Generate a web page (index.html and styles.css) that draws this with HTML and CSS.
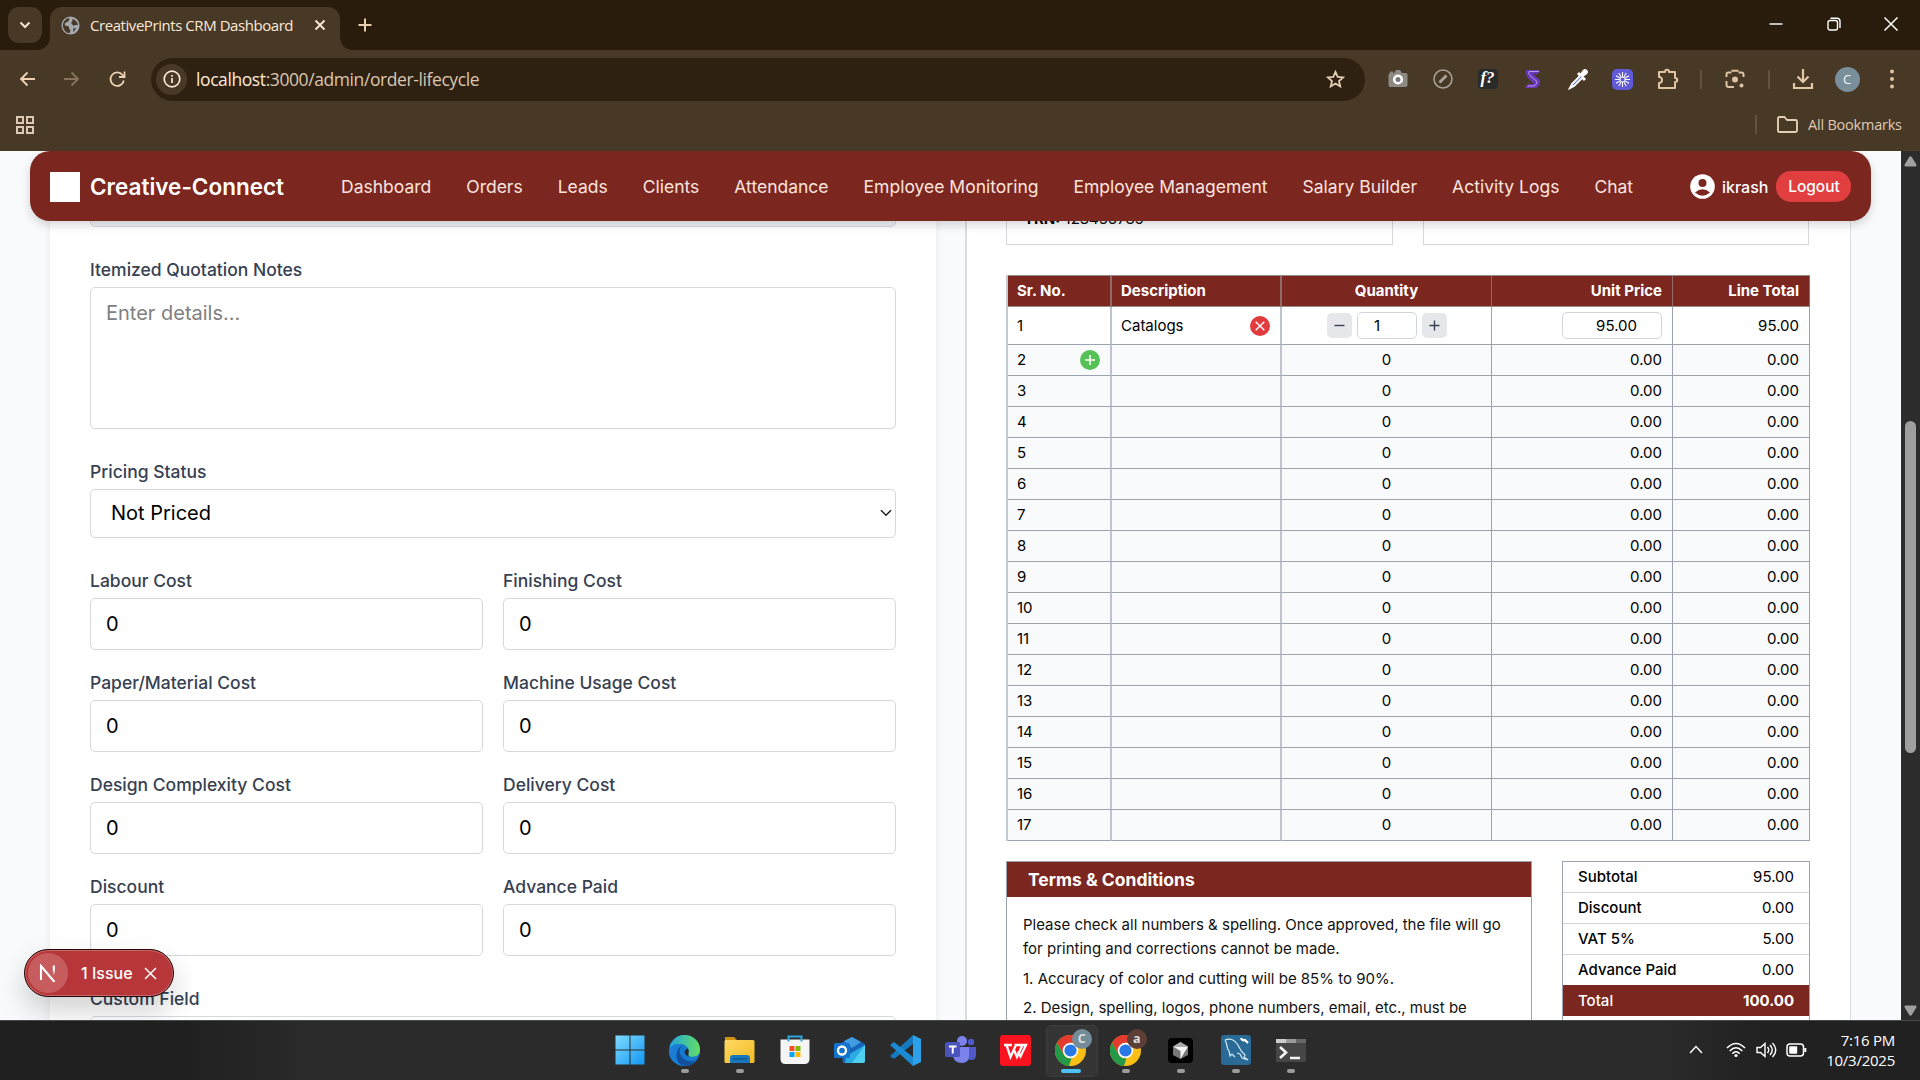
FILE: index.html
```html
<!DOCTYPE html>
<html lang="en">
<head>
<meta charset="utf-8">
<title>CreativePrints CRM Dashboard</title>
<link rel="stylesheet" href="styles.css">
</head>
<body>
<header class="tabstrip">
  <div class="tab-search"><svg width="12" height="8" viewBox="0 0 12 8" fill="none" stroke="#f5e3cf" stroke-width="2"><path d="M1.5 1.5 6 6l4.500-4.500"/></svg></div>
  <div class="tab">
    <svg class="favicon" width="19" height="19" viewBox="0 0 20 20"><circle cx="10" cy="10" r="9.500" fill="#a4a9ae"/><path d="M9 2c-1 2 0 3-2 4s-3 1-3 3 3 1 4 2 0 3 2 4l-1 3C5 18 2 14 2 10S5 2 9 2zM12 3c3 1 5 3 6 6-1 1-3 0-4 1s-2-1-3-2 2-2 1-5zM13 13l3 0-3 4z" fill="#483826"/></svg>
    <span class="tab-title">CreativePrints CRM Dashboard</span>
    <svg class="tab-close" width="12" height="12" viewBox="0 0 12 12" stroke="#f7e6d3" stroke-width="1.900"><path d="M1.500 1.500l9 9M10.500 1.500l-9 9"/></svg>
  </div>
  <svg class="tab-new" width="14" height="14" viewBox="0 0 14 14" stroke="#e8cfae" stroke-width="2"><path d="M7 .5v13M.5 7h13"/></svg>
  <div class="window-controls">
    <svg width="14" height="14" viewBox="0 0 14 14" stroke="#fff" stroke-width="1.400"><path d="M.5 7h13"/></svg>
    <svg width="14" height="14" viewBox="0 0 14 14" fill="none" stroke="#fff" stroke-width="1.400"><rect x="1" y="3.500" width="9.500" height="9.500" rx="2"/><path d="M3.500 1.200H10a3 3 0 0 1 3 3V11"/></svg>
    <svg width="14" height="14" viewBox="0 0 14 14" stroke="#fff" stroke-width="1.500"><path d="M.5.5l13 13M13.500.5l-13 13"/></svg>
  </div>
</header>

<div class="toolbar">
  <div class="nav-buttons">
    <svg width="18" height="18" viewBox="0 0 18 18" fill="none" stroke="#edd3b4" stroke-width="1.800"><path d="M17 9H3M9.500 2.500 3 9l6.500 6.500"/></svg>
    <svg width="18" height="18" viewBox="0 0 18 18" fill="none" stroke="#85735c" stroke-width="1.800"><path d="M1 9h14M8.500 2.500 15 9l-6.500 6.500"/></svg>
    <svg width="18" height="18" viewBox="0 0 18 18" fill="none" stroke="#edd3b4" stroke-width="1.800"><path d="M15.800 10.500A6.700 6.700 0 1 1 14.500 5L16.300 7M16.500 1.500v5.500h-5.500"/></svg>
  </div>
  <div class="omnibox">
    <div class="site-info"><svg width="18" height="18" viewBox="0 0 18 18" fill="none" stroke="#f7e8d8" stroke-width="1.700"><circle cx="9" cy="9" r="7.800"/><path d="M9 8v5M9 5v1.700"/></svg></div>
    <span class="url">localhost<i>:3000/admin/order-lifecycle</i></span>
    <svg class="star" width="19" height="19" viewBox="0 0 20 20" fill="none" stroke="#e3cdb3" stroke-width="1.900"><path d="M10 2l2.300 5.300 5.700.5-4.300 3.800 1.300 5.700-5-3-5 3 1.300-5.700L2 7.800l5.700-.5z"/></svg>
  </div>
  <div class="extensions">
    <span class="slot"><svg width="20" height="20" viewBox="0 0 20 20"><rect x=".5" y="4" width="19" height="14" rx="2" fill="#8d8983"/><path d="M6 4l2-3h4l2 3z" fill="#8d8983"/><rect x="2" y="2.500" width="3" height="2" fill="#8d8983"/><circle cx="10" cy="10.500" r="5" fill="#fff"/><circle cx="10" cy="10.500" r="2.500" fill="#777"/></svg></span>
    <span class="slot"><svg width="20" height="20" viewBox="0 0 20 20" fill="none"><circle cx="10" cy="10" r="9" stroke="#aaa399" stroke-width="1.500"/><path d="M6.500 13.500 13.500 6.500" stroke="#aaa399" stroke-width="3"/></svg></span>
    <span class="slot"><b class="font-ext">f?</b></span>
    <span class="slot"><svg width="18" height="20" viewBox="0 0 18 20"><path d="M2 1h14l-2 4H9l7 6q1 5-4 8H1l3-4h6L3 8Q1 4 2 1z" fill="#6738b8"/><path d="M15 2.500H5q-1 2 1 4l7 6q0 3-3 4.500H3.500" fill="none" stroke="#b99be5" stroke-width="1"/></svg></span>
    <span class="slot"><svg width="20" height="22" viewBox="0 0 20 22"><path d="M12 6l3-4q2-2 4 0t0 4l-4 3z" fill="#fff"/><path d="M10 5l7 7" stroke="#fff" stroke-width="3"/><path d="M12 8 4 16l-2 4 4-2 8-8" fill="#3c58c5" stroke="#fff" stroke-width="2"/></svg></span>
    <span class="slot"><svg width="21" height="21" viewBox="0 0 21 21"><rect width="21" height="21" rx="5" fill="#605ad8"/><g stroke="#fff" stroke-width="1.100"><path d="M10.500 3v15M3 10.500h15M6.750 4l7.500 13M14.250 4l-7.500 13M4 6.750l13 7.500M17 6.750 4 14.250"/></g><circle cx="10.500" cy="10.500" r="2" fill="#605ad8"/></svg></span>
    <span class="slot"><svg width="22" height="22" viewBox="0 0 22 22" fill="none" stroke="#dfc4a2" stroke-width="2" stroke-linejoin="round"><path d="M2 4h6c0-3 4-3 4 0h6v6c3 0 3 4 0 4v6H2v-5c4 0 4-6 0-6z"/></svg></span>
    <span class="slot slot-sep"><i class="sep"></i></span>
    <span class="slot slot-lens"><svg width="20" height="20" viewBox="0 0 20 20" fill="none" stroke="#dcc3a3" stroke-width="2"><path d="M1.500 8V5.500q0-2 2-2H6.500M13.500 3.500h3q2 0 2 2V8M1.500 12v4q0 2 2 2H9M6.500 1.800h7"/><circle cx="10" cy="10.500" r="3" fill="#dcc3a3" stroke="none"/><circle cx="16.500" cy="16.500" r="2" fill="#dcc3a3" stroke="none"/></svg></span>
    <span class="slot slot-sep2"><i class="sep"></i></span>
    <span class="slot slot-download"><svg width="22" height="22" viewBox="0 0 22 22" fill="none" stroke="#e3c8a6" stroke-width="2.200"><path d="M11 1v13M5.500 8.500 11 14l5.500-5.500M2 15v5h18v-5"/></svg></span>
    <span class="slot slot-avatar"><b class="avatar">C</b></span>
    <span class="slot slot-menu"><svg width="6" height="20" viewBox="0 0 6 20" fill="#dfc4a2"><circle cx="3" cy="2.500" r="2"/><circle cx="3" cy="10" r="2"/><circle cx="3" cy="17.500" r="2"/></svg></span>
  </div>
</div>

<div class="bookmarks">
  <svg width="18" height="18" viewBox="0 0 18 18" fill="none" stroke="#dcc8b3" stroke-width="2"><path d="M1 1h6v6H1zM11 1h6v6h-6zM1 11h6v6H1zM11 11h6v6h-6z"/></svg>
  <i class="sep"></i>
  <svg class="folder" width="21" height="17" viewBox="0 0 21 17" fill="none" stroke="#e3ceb5" stroke-width="1.900" stroke-linejoin="round"><path d="M1 2.500Q1 1 2.500 1h5l2.500 3h8.500Q20 4 20 5.500v9Q20 16 18.500 16h-16Q1 16 1 14.500z"/></svg>
  <span class="all-bookmarks">All Bookmarks</span>
</div>

<div class="viewport">
  <nav class="navbar">
    <span class="logo"></span>
    <span class="brand">Creative-Connect</span>
    <div class="links">
      <a>Dashboard</a><a>Orders</a><a>Leads</a><a>Clients</a><a>Attendance</a><a>Employee Monitoring</a><a>Employee Management</a><a>Salary Builder</a><a>Activity Logs</a><a>Chat</a>
    </div>
    <svg width="25" height="25" viewBox="0 0 25 25"><circle cx="12.500" cy="12.500" r="12.300" fill="#fff"/><circle cx="12.500" cy="9" r="4" fill="#7b2720"/><path d="M5 18.500q7.500-6.500 15 0-7.500 6.500-15 0z" fill="#7b2720"/></svg>
    <span class="user">ikrash</span>
    <button class="logout">Logout</button>
  </nav>

  <main class="content">
    <section class="card form-card">
      <div class="box clipped-box"></div>
      <label class="label label-notes">Itemized Quotation Notes</label>
      <div class="box notes">Enter details...</div>
      <label class="label label-status">Pricing Status</label>
      <div class="box select"><span>Not Priced</span><svg width="12" height="8" viewBox="0 0 12 8" fill="none" stroke="#222" stroke-width="1.600"><path d="M1 1.200l5 5 5-5"/></svg></div>
      <div class="cost-grid">
        <div><label class="label">Labour Cost</label><div class="box input">0</div></div>
        <div><label class="label">Finishing Cost</label><div class="box input">0</div></div>
        <div><label class="label">Paper/Material Cost</label><div class="box input">0</div></div>
        <div><label class="label">Machine Usage Cost</label><div class="box input">0</div></div>
        <div><label class="label">Design Complexity Cost</label><div class="box input">0</div></div>
        <div><label class="label">Delivery Cost</label><div class="box input">0</div></div>
        <div><label class="label">Discount</label><div class="box input">0</div></div>
        <div><label class="label">Advance Paid</label><div class="box input">0</div></div>
      </div>
      <label class="label label-custom">Custom Field</label>
      <div class="box input"></div>
    </section>

    <section class="card quote-card">
      <div class="parties">
        <div class="party"><b>TRN:</b> 123456789</div>
        <div class="party"></div>
      </div>
      <table class="items">
        <colgroup><col class="c1"><col class="c2"><col class="c3"><col class="c4"><col class="c5"></colgroup>
        <thead><tr><th>Sr. No.</th><th>Description</th><th>Quantity</th><th>Unit Price</th><th>Line Total</th></tr></thead>
        <tbody>
          <tr class="filled">
            <td>1</td>
            <td><div class="spread">Catalogs<svg width="20" height="20" viewBox="0 0 20 20" stroke="#fff" stroke-width="1.400"><circle cx="10" cy="10" r="10" fill="#e23b3e" stroke="none"/><path d="M5.700 5.700l8.600 8.600M14.300 5.700l-8.600 8.600"/></svg></div></td>
            <td><div class="stepper"><span class="step"><svg width="11" height="11" viewBox="0 0 11 11" stroke="#374151" stroke-width="1.400"><path d="M.5 5.500h10"/></svg></span><span class="qty">1</span><span class="step"><svg width="11" height="11" viewBox="0 0 11 11" stroke="#374151" stroke-width="1.400"><path d="M.5 5.500h10M5.500.5v10"/></svg></span></div></td>
            <td><div class="price">95.00</div></td>
            <td>95.00</td>
          </tr>
          <tr><td><div class="spread">2<svg width="20" height="20" viewBox="0 0 20 20" stroke="#fff" stroke-width="1.500"><circle cx="10" cy="10" r="10" fill="#56c157" stroke="none"/><path d="M10 5v10M5 10h10"/></svg></div></td><td></td><td>0</td><td>0.00</td><td>0.00</td></tr>
          <tr><td>3</td><td></td><td>0</td><td>0.00</td><td>0.00</td></tr>
          <tr><td>4</td><td></td><td>0</td><td>0.00</td><td>0.00</td></tr>
          <tr><td>5</td><td></td><td>0</td><td>0.00</td><td>0.00</td></tr>
          <tr><td>6</td><td></td><td>0</td><td>0.00</td><td>0.00</td></tr>
          <tr><td>7</td><td></td><td>0</td><td>0.00</td><td>0.00</td></tr>
          <tr><td>8</td><td></td><td>0</td><td>0.00</td><td>0.00</td></tr>
          <tr><td>9</td><td></td><td>0</td><td>0.00</td><td>0.00</td></tr>
          <tr><td>10</td><td></td><td>0</td><td>0.00</td><td>0.00</td></tr>
          <tr><td>11</td><td></td><td>0</td><td>0.00</td><td>0.00</td></tr>
          <tr><td>12</td><td></td><td>0</td><td>0.00</td><td>0.00</td></tr>
          <tr><td>13</td><td></td><td>0</td><td>0.00</td><td>0.00</td></tr>
          <tr><td>14</td><td></td><td>0</td><td>0.00</td><td>0.00</td></tr>
          <tr><td>15</td><td></td><td>0</td><td>0.00</td><td>0.00</td></tr>
          <tr><td>16</td><td></td><td>0</td><td>0.00</td><td>0.00</td></tr>
          <tr><td>17</td><td></td><td>0</td><td>0.00</td><td>0.00</td></tr>
        </tbody>
      </table>
      <div class="bottom">
        <div class="terms">
          <h3>Terms &amp; Conditions</h3>
          <div class="terms-body">
            <p>Please check all numbers &amp; spelling. Once approved, the file will go<br>for printing and corrections cannot be made.</p>
            <p>1. Accuracy of color and cutting will be 85% to 90%.</p>
            <p>2. Design, spelling, logos, phone numbers, email, etc., must be</p>
          </div>
        </div>
        <div class="summary">
          <div><span>Subtotal</span><span>95.00</span></div>
          <div><span>Discount</span><span>0.00</span></div>
          <div><span>VAT 5%</span><span>5.00</span></div>
          <div><span>Advance Paid</span><span>0.00</span></div>
          <div class="total"><span>Total</span><b>100.00</b></div>
        </div>
      </div>
    </section>
  </main>

  <div class="scrollbar">
    <svg width="13" height="11" viewBox="0 0 13 11" fill="#a0a0a0"><path d="M5.200 1Q6.500-.6 7.800 1l4.500 7.500q.7 2-1 2H1.700q-1.700 0-1-2z"/></svg>
    <i class="thumb"></i>
    <svg width="13" height="11" viewBox="0 0 13 11" fill="#a0a0a0"><path d="M5.200 10Q6.500 11.600 7.800 10l4.500-7.500q.7-2-1-2H1.700q-1.700 0-1 2z"/></svg>
  </div>

  <div class="issue">
    <span class="n-logo"><svg width="18" height="18" viewBox="0 0 18 18" fill="none"><defs><linearGradient id="nf" x1="0" y1="0" x2="0" y2="1"><stop offset=".4" stop-color="#fff"/><stop offset="1" stop-color="#fff" stop-opacity="0"/></linearGradient></defs><path d="M2 16V2l13.500 16" stroke="#fff" stroke-width="2.100"/><path d="M13.800 1.500h2.100v10h-2.100z" fill="url(#nf)"/></svg></span>
    <span class="issue-text">1 Issue</span>
    <svg width="13" height="13" viewBox="0 0 13 13" stroke="#fff" stroke-width="1.500"><path d="M1 1l11 11M12 1 1 12"/></svg>
  </div>
</div>

<footer class="taskbar">
  <svg width="0" height="0" class="defs"><defs>
    <linearGradient id="win" x1="0" y1="0" x2="1" y2="1"><stop offset="0" stop-color="#7fdcff"/><stop offset="1" stop-color="#1296f3"/></linearGradient>
    <linearGradient id="edge1" x1="0" y1="0" x2="1" y2="0"><stop offset="0" stop-color="#22a6dc"/><stop offset="1" stop-color="#63df62"/></linearGradient>
    <linearGradient id="fold" x1="0" y1="0" x2="1" y2="1"><stop offset="0" stop-color="#ffda66"/><stop offset="1" stop-color="#f4b921"/></linearGradient>
  </defs></svg>
  <div class="apps">
    <span class="app"><svg width="30" height="30" viewBox="0 0 30 30" fill="url(#win)"><path d="M.5.500h14v14H.5zM15.500.5h14v14h-14zM.5 15.500h14v14H.5zM15.500 15.500h14v14h-14z"/></svg></span>
    <span class="app running"><svg width="31" height="31" viewBox="0 0 30 30"><circle cx="15" cy="15" r="15" fill="#1479cf"/><path d="M1 10C5 2 10 0 15 0c8 0 15 6 15 14 0 6-4 7-8 7-5 0-4-3-3-5 0-5-5-8-10-7-3 0-6 2-8 5z" fill="url(#edge1)"/><path d="M0 16C1 9 8 7 13 10c-4 1-6 6-3 11 3 5 9 7 16 4-3 4-7 5-11 5C7 30 0 24 0 16z" fill="#1a7fd4"/><path d="M13 10c-5 4-3 12 5 15 4 1 6 1 9-1-4 6-10 7-15 5-6-3-7-15 1-19z" fill="#12509c"/><path d="M18 13c3 3-1 6 2 8-5-1-7-6-2-8z" fill="#292929"/></svg></span>
    <span class="app running"><svg width="31" height="28" viewBox="0 0 31 28"><path d="M1 1h9l3 3h6v6H1z" fill="#cf930d"/><rect x=".5" y="4" width="30" height="23" rx="1.500" fill="url(#fold)"/><path d="M6 27v-5q0-3 3-3h14q3 0 3 3v5z" fill="#1878bd"/><path d="M9 23h14" stroke="#0f5792" stroke-width="1.500"/></svg></span>
    <span class="app"><svg width="30" height="30" viewBox="0 0 30 30"><path d="M.5 4.500h29V24q0 5-5 5h-19q-5 0-5-5z" fill="#f5f5f5"/><path d="M8.500 6.500v-5h13v5" fill="none" stroke="#2ea7dc" stroke-width="2"/><path d="M9.500 11h5v5h-5z" fill="#f25022"/><path d="M15.500 11h5v5h-5z" fill="#7fba00"/><path d="M9.500 17h5v5h-5z" fill="#00a4ef"/><path d="M15.500 17h5v5h-5z" fill="#ffb900"/></svg></span>
    <span class="app"><svg width="31" height="28" viewBox="0 0 31 28"><path d="M7 7l11-6 13 7v17q0 2-2 2H9z" fill="#1565b8"/><path d="M10 5l8-4 9 5-9 6z" fill="#3f9be2"/><path d="M31 9v16q0 2-2 2H11z" fill="#4fd0ee"/><path d="M12 20 31 9 18 27h-7z" fill="#2caae4"/><rect y="7" width="16" height="15" rx="1.500" fill="#1372cc"/><circle cx="8" cy="14.500" r="4" fill="none" stroke="#fff" stroke-width="2.300"/></svg></span>
    <span class="app"><svg width="31" height="31" viewBox="0 0 31 31"><path d="M23 0 31 4v23l-8 4z" fill="#2da0ea"/><path d="M23 0v9L4 24l-4-3z" fill="#1479be"/><path d="M23 31v-9L4 7 0 10z" fill="#1b8ad2"/></svg></span>
    <span class="app"><svg width="31" height="28" viewBox="0 0 31 28"><circle cx="17" cy="5" r="5" fill="#7b83eb"/><circle cx="26" cy="6" r="3.200" fill="#5059c9"/><path d="M23 11h8v8q0 5-5 5-4 0-4-4z" fill="#5059c9"/><path d="M8 11h16v9q0 7-7 7-8 0-9-7z" fill="#7b83eb"/><rect y="6" width="15" height="15" rx="1.500" fill="#4b53bc"/><path d="M4 10.500h7.500M7.750 10.500v7" stroke="#fff" stroke-width="2"/></svg></span>
    <span class="app"><svg width="31" height="31" viewBox="0 0 31 31"><rect width="31" height="31" rx="3" fill="#f8131f"/><path d="M4 10h8M6.500 10l4 12 5-11M14 15l3 7 5.500-12M14.500 10H26l-5.500 11.500-2.500-5" fill="none" stroke="#fff" stroke-width="2.300"/></svg></span>
    <span class="app running active"><svg width="31" height="31" viewBox="0 0 30 30"><circle cx="15" cy="15" r="15" fill="#fbbf16"/><path d="M2 7.500A15 15 0 0 1 28 7.500H15L8.500 19z" fill="#e33b2e"/><path d="M2 7.500 8.500 19Q11 23 16 22.500L13.500 30A15 15 0 0 1 2 7.500z" fill="#229a48"/><circle cx="15" cy="15" r="7.500" fill="#fff"/><circle cx="15" cy="15" r="5.900" fill="#2878e8"/></svg><b class="profile grey">C</b></span>
    <span class="app running"><svg width="31" height="31" viewBox="0 0 30 30"><circle cx="15" cy="15" r="15" fill="#fbbf16"/><path d="M2 7.500A15 15 0 0 1 28 7.500H15L8.500 19z" fill="#e33b2e"/><path d="M2 7.500 8.500 19Q11 23 16 22.500L13.500 30A15 15 0 0 1 2 7.500z" fill="#229a48"/><circle cx="15" cy="15" r="7.500" fill="#fff"/><circle cx="15" cy="15" r="5.900" fill="#2878e8"/></svg><b class="profile brown">a</b></span>
    <span class="app running"><svg width="25" height="25" viewBox="0 0 25 25"><rect width="25" height="25" rx="4" fill="#000"/><path d="M12.500 4 20 8.500v8.500L12.500 21 5 17V8.500z" fill="#777"/><path d="M5 8.500h15L12.500 21v-8z" fill="#f4f4f4"/><path d="M5 8.500 12.500 4 20 8.500z" fill="#aaa"/></svg></span>
    <span class="app running"><svg width="30" height="30" viewBox="0 0 30 30" fill="none"><rect width="30" height="30" rx="3" fill="#2a6a96"/><path d="M4 5c5-2 10 0 13 5 2 4 3 7 7 10l-1 2 4 3-6-2-2-4-3-1M4 5c3 5 1 8 4 11l1 5 2-2 3 3" stroke="#d4e9f4" stroke-width="1.200"/><path d="M20 3q1 3 4 2l3 3" stroke="#fff" stroke-width="2.200"/></svg></span>
    <span class="app running"><svg width="30" height="23" viewBox="0 0 30 23"><rect width="30" height="23" rx="1" fill="#464646"/><path d="M0 0h10v4H0z" fill="#ccc"/><path d="M10 0h10v4H10z" fill="#999"/><path d="M20 0h10v4H20z" fill="#686868"/><path d="M4 8l6 5.500L4 19M14 19h10" fill="none" stroke="#f4f4f4" stroke-width="2.600"/></svg></span>
  </div>
  <div class="tray">
    <svg class="t-chev" width="14" height="9" viewBox="0 0 14 9" fill="none" stroke="#fff" stroke-width="1.500"><path d="M1 8l6-6.500L13 8"/></svg>
    <svg class="t-wifi" width="20" height="16" viewBox="0 0 20 16" fill="none" stroke="#fff" stroke-width="1.500"><path d="M1 6q9-9 18 0M3.700 9q6.300-6.500 12.600 0M6.300 11.800q3.700-4 7.400 0"/><circle cx="10" cy="13.500" r="1.600" fill="#fff" stroke="none"/></svg>
    <svg class="t-vol" width="21" height="16" viewBox="0 0 21 16" fill="none" stroke="#fff" stroke-width="1.400"><path d="M1 5.500h3.500L9 1.500v13l-4.500-4H1zM11.500 5q2.500 3 0 6M14 3q4.500 5 0 10M16.500 1q6.500 7 0 14"/></svg>
    <svg class="t-bat" width="21" height="14" viewBox="0 0 21 14" fill="none" stroke="#fff" stroke-width="1.500"><rect x="1" y="1" width="16.500" height="12" rx="3"/><rect x="3.200" y="3.200" width="8" height="7.600" rx="1" fill="#fff" stroke="none"/><path d="M19.300 5v4" stroke-width="2"/></svg>
    <div class="clock"><span class="time">7:16 PM</span><span>10/3/2025</span></div>
  </div>
</footer>
</body>
</html>
```

FILE: styles.css
```css
* { box-sizing: border-box; }
body {
  margin: 0;
  width: 1920px;
  height: 1080px;
  overflow: hidden;
  display: flex;
  flex-direction: column;
  background: #483826;
  font-family: Inter, sans-serif;
  font-size: 15px;
  color: #111;
}
svg { display: block; flex: none; }

/* Browser chrome */
.tabstrip, .toolbar, .bookmarks, .taskbar { font-family: "Open Sans", "Noto Sans", sans-serif; }
.tabstrip {
  height: 50px;
  flex: none;
  display: flex;
  align-items: flex-start;
  padding: 7px 0 0 8px;
  background: #2a1c0d;
}
.tab-search {
  width: 34px;
  height: 36px;
  border-radius: 11px;
  background: #483826;
  display: flex;
  align-items: center;
  justify-content: center;
}
.tab {
  position: relative;
  width: 290px;
  height: 43px;
  margin-left: 8px;
  padding: 0 14px 7px 11px;
  display: flex;
  align-items: center;
  border-radius: 12px 12px 0 0;
  background: #483826;
}
.tab::before, .tab::after {
  content: "";
  position: absolute;
  bottom: 0;
  width: 12px;
  height: 12px;
}
.tab::before { left: -12px; background: radial-gradient(circle at 0 0, transparent 11.5px, #483826 12px); }
.tab::after { right: -12px; background: radial-gradient(circle at 100% 0, transparent 11.5px, #483826 12px); }
.tab-title {
  flex: 1;
  margin-left: 10px;
  font-size: 15px;
  letter-spacing: -0.44px;
  white-space: nowrap;
  color: #fbe9d6;
}
.tab-new { margin: 11px 0 0 18px; }
.window-controls { display: flex; gap: 43.500px; margin: 10px 22px 0 auto; }

.toolbar {
  height: 58px;
  flex: none;
  display: flex;
  align-items: center;
  padding-left: 18px;
  border-radius: 10px 10px 0 0;
}
.nav-buttons { display: flex; gap: 27px; width: 133px; }
.omnibox {
  width: 1214px;
  height: 43px;
  padding: 0 20px 0 5px;
  display: flex;
  align-items: center;
  border-radius: 22px;
  background: #2f2112;
}
.site-info {
  width: 31px;
  height: 31px;
  border-radius: 50%;
  background: #483826;
  display: flex;
  align-items: center;
  justify-content: center;
}
.url { margin-left: 9px; font-size: 17.5px; letter-spacing: -0.41px; color: #fcead7; }
.url i { font-style: normal; color: #d9c6b0; }
.star { margin-left: auto; }
.extensions { display: flex; margin-left: 10px; }
.slot { width: 45px; height: 30px; display: flex; align-items: center; justify-content: center; }
.slot-sep { width: 21px; }
.slot-lens { width: 48px; }
.slot-sep2 { width: 20px; }
.slot-download { width: 47px; }
.slot-avatar { width: 42px; }
.slot-menu { width: 48px; }
.sep { width: 2px; height: 19px; background: #65523d; }
.font-ext {
  width: 20px;
  height: 20px;
  border-radius: 4px;
  background: #292b2b;
  color: #fff;
  font: italic bold 17px/18px "Liberation Serif", serif;
  text-align: center;
}
.avatar {
  width: 25px;
  height: 25px;
  border-radius: 50%;
  background: #7a8f9c;
  color: #f3f6f8;
  font-weight: 400;
  font-size: 13px;
  line-height: 25px;
  text-align: center;
}
.bookmarks {
  height: 43px;
  flex: none;
  display: flex;
  align-items: center;
  padding: 0 19px 10px 16px;
}
.bookmarks .sep { margin-left: auto; }
.folder { margin: 0 10px 0 20px; }
.all-bookmarks { width: 93px; font-size: 14.500px; letter-spacing: -0.22px; white-space: nowrap; color: #dfcbb5; }

/* Page */
.viewport {
  position: relative;
  height: 869px;
  flex: none;
  display: flex;
  overflow: hidden;
  background: #f8fafc;
}
.navbar {
  position: absolute;
  z-index: 2;
  top: 0;
  left: 30px;
  width: 1841px;
  height: 70px;
  padding: 1px 20px 0;
  display: flex;
  align-items: center;
  border-radius: 20px;
  background: #7b2720;
  box-shadow: 0 4px 10px rgba(0, 0, 0, .16);
  color: #fff;
}
.logo { width: 30px; height: 30px; background: #fff; }
.brand { width: 251px; margin-left: 10px; font-size: 22.5px; font-weight: 600; white-space: nowrap; }
.links { flex: 1; display: flex; gap: 35px; font-size: 17.5px; color: #fbe4df; white-space: nowrap; }
.user { margin-left: 7px; width: 54px; font-size: 16px; font-weight: 500; }
.logout {
  width: 75px;
  height: 31px;
  padding: 0 0 0 1px;
  border: 0;
  border-radius: 15px;
  background: #e13e3f;
  color: #fff;
  font: 500 15.5px Inter, sans-serif;
}
.content {
  width: 1901px;
  padding: 0 50px;
  display: grid;
  grid-template-columns: 886px 886px;
  gap: 29px;
}
.card { height: 920px; background: #fff; }
.form-card { padding: 0 40px; box-shadow: 0 0 8px rgba(0, 0, 0, .07); }
.box { border: 1px solid #d5d8dc; border-radius: 5px; background: #fff; }
.clipped-box { height: 76px; background: #f1f2f3; }
.label { display: block; height: 25px; margin-bottom: 5px; font-size: 17.5px; line-height: 25px; font-weight: 500; color: #374151; }
.label-notes { margin-top: 30px; }
.notes { height: 142px; padding: 10px 15px; font-size: 20px; line-height: 30px; color: #808080; }
.label-status { margin-top: 30px; }
.select { height: 49px; padding: 0 3px 1px 20px; display: flex; align-items: center; justify-content: space-between; font-size: 20px; color: #000; }
.cost-grid { display: grid; grid-template-columns: 393px 393px; gap: 20px; margin-top: 30px; }
.input { height: 52px; padding-left: 15px; font-size: 20px; line-height: 50px; color: #000; }
.label-custom { margin-top: 30px; }

.quote-card { padding: 0 40px 0 39px; border: solid #d9dce2; border-width: 0 1px 0 2px; }
.parties { display: grid; grid-template-columns: 387px 386px; gap: 30px; }
.party { height: 94px; padding: 57px 0 0 17px; border: 1px solid #d5d8dc; line-height: 20px; font-size: 15px; color: #000; }
.items {
  width: 804px;
  margin-top: 30px;
  border-spacing: 0;
  table-layout: fixed;
  border-left: 2px solid #c4c8cf;
  color: #000;
}
.c1 { width: 104px; }
.c2 { width: 170px; }
.c3 { width: 210px; }
.c4 { width: 181px; }
.c5 { width: 137px; }
.items th, .items td {
  height: 31px;
  padding: 0 10px;
  border-right: 1px solid #9ca3af;
  border-bottom: 1px solid #9ca3af;
  text-align: right;
  line-height: 20px;
}
.items td { background: #f9fafb; }
.items .filled td { height: 38px; background: #fff; }
.items tr > :nth-child(-n+2) { text-align: left; padding-left: 9px; border-right: 2px solid #bfc4cc; }
.items tr > :nth-child(3) { text-align: center; }
.items tr > th:nth-child(n) { height: 32px; border-top: 1px solid #9a8b8b; border-bottom-color: #9a8b8b; border-right-color: #8f6c69; background: #7b2720; color: #fff; font-weight: 700; }
.spread { display: flex; align-items: center; justify-content: space-between; }
.stepper { display: flex; align-items: center; justify-content: center; gap: 5px; }
.step { width: 25px; height: 25px; border-radius: 5px; background: #e5e7eb; display: flex; align-items: center; justify-content: center; }
.qty { width: 60px; height: 27px; padding-right: 19px; border: 1px solid #d1d5db; border-radius: 5px; line-height: 25px; }
.price { width: 100px; height: 27px; margin-left: auto; padding-right: 24px; border: 1px solid #d1d5db; border-radius: 5px; line-height: 25px; }
.bottom { display: grid; grid-template-columns: 526px 248px; gap: 30px; margin-top: 20px; align-items: start; }
.terms { height: 170px; border: 1px solid #9ca3af; color: #111; }
.terms h3 { margin: 0; height: 35px; padding-left: 21px; background: #7b2720; color: #fff; font-size: 17.5px; line-height: 36px; font-weight: 700; }
.terms-body { padding: 16px; }
.terms p { margin: 0 0 5px; line-height: 24.400px; white-space: nowrap; }
.summary { height: 170px; border: 1px solid #9ca3af; color: #000; }
.summary div { height: 31px; padding: 0 15px 1px; display: flex; align-items: center; justify-content: space-between; border-bottom: 1px solid #d1d5db; }
.summary span:first-child { font-weight: 500; }
.summary .total { margin-top: -1px; padding-bottom: 0; background: #7b2720; border: 0; color: #fff; }

.scrollbar { width: 19px; padding: 5px 0 4px 3px; display: flex; flex-direction: column; background: #2c2c2c; }
.thumb { width: 11px; height: 332px; margin: 254px 0 auto 1px; border-radius: 6px; background: #9f9f9f; }

.issue {
  position: absolute;
  z-index: 3;
  left: 24px;
  top: 798px;
  width: 150px;
  height: 48px;
  padding-left: 3px;
  display: flex;
  align-items: center;
  border-radius: 24px;
  border: 1px solid #25090a;
  background: #b63639;
  box-shadow: inset 0 0 0 1px #ca6769, 0 14px 28px rgba(0, 0, 0, .18);
  color: #fff;
}
.n-logo { width: 40px; height: 40px; border-radius: 50%; background: #c65c5e; display: flex; align-items: center; justify-content: center; }
.issue-text { width: 63px; margin-left: 13px; font-size: 16px; font-weight: 500; }

/* Taskbar */
.taskbar {
  position: relative;
  height: 60px;
  flex: none;
  display: flex;
  justify-content: space-between;
  padding: 0 25px 0 602px;
  border-top: 1px solid #484a4a;
  background: linear-gradient(90deg, #202020 180px, #2b2b2b 320px, #2b2b2b 1660px, #212121 1760px);
  color: #fff;
}
.defs { position: absolute; }
.apps { display: flex; }
.app { position: relative; width: 55.100px; height: 59px; padding-bottom: 1px; display: flex; align-items: center; justify-content: center; }
.running::after { content: ""; position: absolute; bottom: 7px; left: 24px; width: 8px; height: 4px; border-radius: 2px; background: #9c9c9c; }
.active::before { content: ""; position: absolute; left: 3px; top: 4px; width: 50px; height: 50px; border-radius: 5px; background: #353535; border: 1px solid #3e3e3e; }
.active svg { position: relative; }
.active::after { left: 18px; width: 20px; background: #4cc2f5; }
.profile { position: absolute; left: 29px; top: 8px; width: 20px; height: 20px; border-radius: 50%; font-size: 12.500px; line-height: 19px; text-align: center; color: #ddd; }
.grey { background: #738c98; }
.brown { background: #5d3f36; }
.tray { display: flex; align-items: center; padding-bottom: 2px; }
.t-wifi { margin-left: 23px; }
.t-vol { margin-left: 10px; }
.t-bat { margin-left: 9px; }
.clock { width: 88px; display: flex; flex-direction: column; align-items: flex-end; font-size: 15px; line-height: 20px; letter-spacing: -0.25px; white-space: nowrap; }
```
